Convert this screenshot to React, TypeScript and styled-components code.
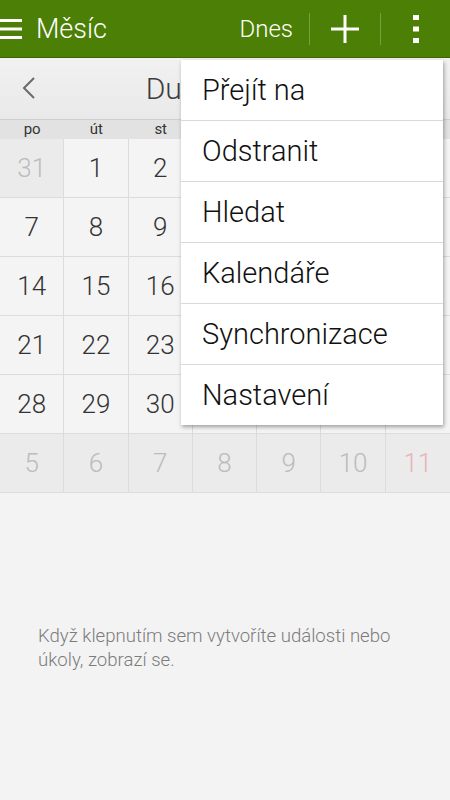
import React from 'react';
import styled, { createGlobalStyle } from 'styled-components';

const GlobalStyle = createGlobalStyle`
  html, body {
    margin: 0;
    padding: 0;
    background: #f3f3f3;
    font-family: Roboto, "Noto Sans", "Liberation Sans", sans-serif;
  }
`;

const Screen = styled.div`
  position: relative;
  width: 450px;
  height: 800px;
  overflow: hidden;
  background: #f3f3f3;
`;

const ActionBar = styled.div`
  height: 57px;
  background: #4b7f05;
  border-bottom: 1px solid #3c6504;
  display: flex;
  align-items: center;
  color: #fff;
`;

const Title = styled.div`
  font-size: 27px;
  font-weight: 300;
  margin-left: 14px;
  flex: 1;
`;

const TodayButton = styled.div`
  font-size: 24px;
  font-weight: 300;
  padding-right: 16px;
`;

const Divider = styled.div`
  width: 1px;
  height: 32px;
  background: rgba(255, 255, 255, 0.25);
`;

const IconButton = styled.div<{ w: number }>`
  width: ${p => p.w}px;
  height: 57px;
  display: flex;
  align-items: center;
  justify-content: center;
`;

const MonthNav = styled.div`
  height: 61px;
  background: linear-gradient(#f1f1f1, #e9e9e9);
  border-bottom: 1px solid #cfcfcf;
  display: flex;
  align-items: center;
  justify-content: center;
  position: relative;
`;

const NavArrow = styled.div<{ side: 'left' | 'right' }>`
  position: absolute;
  top: 18px;
  ${p => (p.side === 'left' ? 'left: 20px;' : 'right: 20px;')}
`;

const MonthTitle = styled.div`
  font-size: 30px;
  font-weight: 300;
  color: #3c3c3c;
`;

const Grid = styled.div`
  display: grid;
  grid-template-columns: repeat(7, 1fr);
`;

const DayName = styled.div`
  height: 19px;
  background: #e2e2e2;
  font-size: 15px;
  color: #333;
  text-align: center;
  line-height: 19px;
`;

const DayCell = styled.div<{ muted?: boolean; tone?: 'normal' | 'dim' | 'sunday' }>`
  height: 58px;
  border-right: 1px solid #dcdcdc;
  border-bottom: 1px solid #dcdcdc;
  background: ${p => (p.muted ? '#ebebeb' : '#f4f4f4')};
  display: flex;
  align-items: center;
  justify-content: center;
  font-size: 26px;
  font-weight: 300;
  color: ${p => (p.tone === 'dim' ? '#bcbcbc' : p.tone === 'sunday' ? '#eab4b4' : '#333')};
  &:nth-child(7n) {
    border-right: none;
  }
`;

const EmptyNote = styled.div`
  width: 372px;
  padding: 131px 0 0 38px;
  font-size: 18.6px;
  font-weight: 300;
  line-height: 24px;
  color: #7c7c7c;
`;

const Menu = styled.div`
  position: absolute;
  left: 181px;
  top: 60px;
  width: 262px;
  background: #fff;
  box-shadow: 1px 2px 4px rgba(0, 0, 0, 0.35);
`;

const MenuItem = styled.div`
  height: 60px;
  border-bottom: 1px solid #d9d9d9;
  display: flex;
  align-items: center;
  padding-left: 21px;
  font-size: 29px;
  font-weight: 300;
  color: #111;
  &:last-child {
    border-bottom: none;
  }
`;

const dayNames = ['po', 'út', 'st', 'čt', 'pá', 'so', 'ne'];

const weeks: { n: number; tone: 'normal' | 'dim' | 'sunday'; muted?: boolean }[][] = [
  [31, 1, 2, 3, 4, 5, 6].map((n, i) => ({ n, tone: i === 0 ? 'dim' : 'normal', muted: i === 0 })),
  [7, 8, 9, 10, 11, 12, 13].map(n => ({ n, tone: 'normal' })),
  [14, 15, 16, 17, 18, 19, 20].map(n => ({ n, tone: 'normal' })),
  [21, 22, 23, 24, 25, 26, 27].map(n => ({ n, tone: 'normal' })),
  [28, 29, 30, 1, 2, 3, 4].map((n, i) => ({ n, tone: i > 2 ? 'dim' : 'normal' })),
  [5, 6, 7, 8, 9, 10, 11].map((n, i) => ({ n, tone: i === 6 ? 'sunday' : 'dim', muted: true })),
];

const menuItems = ['Přejít na', 'Odstranit', 'Hledat', 'Kalendáře', 'Synchronizace', 'Nastavení'];

const App: React.FC = () => {
  return (
    <Screen>
      <GlobalStyle />
      <ActionBar>
        <svg width="22" height="24" viewBox="0 0 22 24">
          <rect x="0" y="2" width="22" height="3" fill="#fff" />
          <rect x="0" y="10.5" width="22" height="3" fill="#fff" />
          <rect x="0" y="19" width="22" height="3" fill="#fff" />
        </svg>
        <Title>Měsíc</Title>
        <TodayButton>Dnes</TodayButton>
        <Divider />
        <IconButton w={70}>
          <svg width="28" height="28" viewBox="0 0 28 28">
            <rect x="12.5" y="0" width="3" height="28" fill="#fff" />
            <rect x="0" y="12.5" width="28" height="3" fill="#fff" />
          </svg>
        </IconButton>
        <Divider />
        <IconButton w={69}>
          <svg width="6" height="28" viewBox="0 0 6 28">
            <rect x="0" y="0" width="6" height="5" fill="#fff" />
            <rect x="0" y="11.5" width="6" height="5" fill="#fff" />
            <rect x="0" y="23" width="6" height="5" fill="#fff" />
          </svg>
        </IconButton>
      </ActionBar>
      <MonthNav>
        <NavArrow side="left">
          <svg width="18" height="24" viewBox="0 0 18 24">
            <polyline points="14,2 4,12 14,22" fill="none" stroke="#6a6a6a" strokeWidth="2" />
          </svg>
        </NavArrow>
        <MonthTitle>Duben 2014</MonthTitle>
        <NavArrow side="right">
          <svg width="18" height="24" viewBox="0 0 18 24">
            <polyline points="4,2 14,12 4,22" fill="none" stroke="#6a6a6a" strokeWidth="2" />
          </svg>
        </NavArrow>
      </MonthNav>
      <Grid>
        {dayNames.map(d => (
          <DayName key={d}>{d}</DayName>
        ))}
        {weeks.flat().map((c, i) => (
          <DayCell key={i} tone={c.tone} muted={c.muted}>
            {c.n}
          </DayCell>
        ))}
      </Grid>
      <EmptyNote>Když klepnutím sem vytvoříte události nebo úkoly, zobrazí se.</EmptyNote>
      <Menu>
        {menuItems.map(m => (
          <MenuItem key={m}>{m}</MenuItem>
        ))}
      </Menu>
    </Screen>
  );
};

export default App;
